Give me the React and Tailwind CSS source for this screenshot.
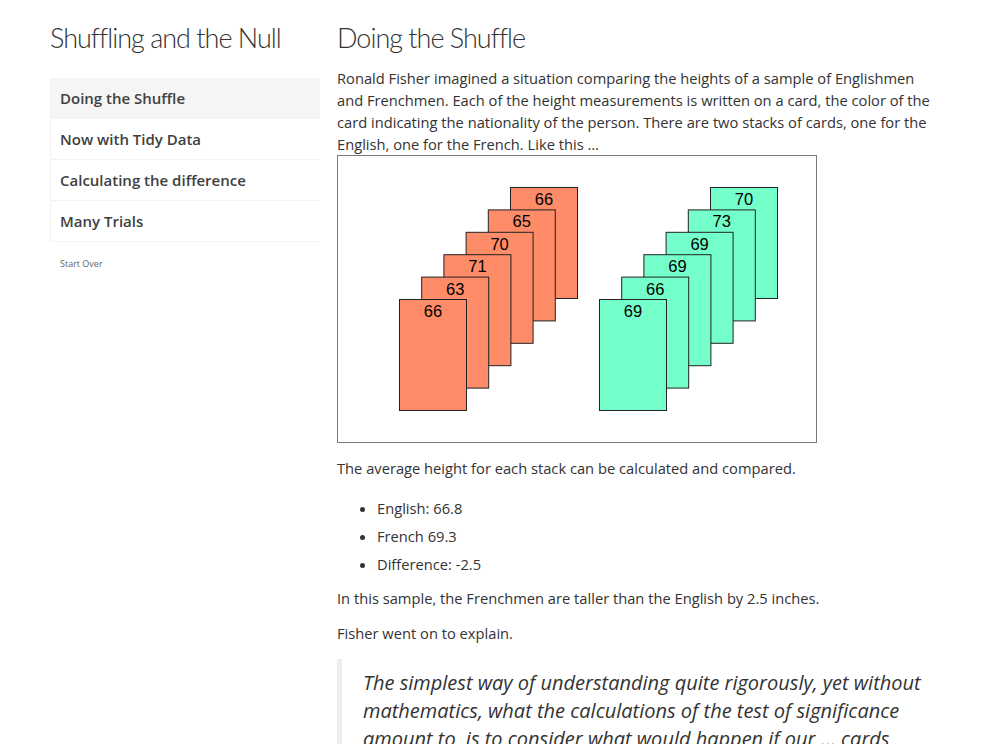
const ORANGE = [66, 63, 71, 70, 65, 66];
const TEAL = [69, 66, 69, 69, 73, 70];

function CardStack({ x0, values, fill }) {
  // values listed front -> back, drawn back -> front
  const cards = values.map((v, i) => ({ v, x: x0 + i * 22.2, y: 143 - i * 22.4 }));
  return (
    <g>
      {cards.slice().reverse().map((c, i) => (
        <g key={i}>
          <rect x={c.x + 0.5} y={c.y + 0.5} width={67} height={111} fill={fill} stroke="#222" strokeWidth="1" />
          <text x={c.x + 34} y={c.y + 18} textAnchor="middle" fontSize="16.5" fill="#000" fontFamily="'Liberation Sans', Arial, sans-serif">
            {c.v}
          </text>
        </g>
      ))}
    </g>
  );
}

function Figure() {
  return (
    <div className="w-[480px] h-[288px] border border-[#7a7a7a] bg-white">
      <svg width="478" height="286" viewBox="0 0 478 286">
        <CardStack x0={61} values={ORANGE} fill="#ff8c69" />
        <CardStack x0={261} values={TEAL} fill="#74ffca" />
      </svg>
    </div>
  );
}

const NAV = ['Doing the Shuffle', 'Now with Tidy Data', 'Calculating the difference', 'Many Trials'];

export default function App() {
  const body = { fontFamily: "'Open Sans', 'Noto Sans', sans-serif" };
  const light = { fontFamily: "Lato, 'Helvetica Neue', sans-serif" };

  return (
    <div className="h-[744px] overflow-hidden bg-white text-[#333]" style={body}>
      <div className="flex pl-[50px] pt-[20px] gap-[17px]">
        {/* sidebar */}
        <div className="w-[270px] shrink-0">
          <h1 className="text-[27px] leading-[36px] font-light tracking-[-1px] text-[#333] mb-[22px]" style={light}>
            Shuffling and the Null
          </h1>
          <ul className="border-l border-[#f2f2f2]">
            {NAV.map((n, i) => (
              <li
                key={n}
                className={`h-[41px] flex items-center pl-[9px] pt-[1px] text-[15px] font-semibold text-[#404040] border-b border-[#f3f3f3] ${i === 0 ? 'bg-[#f5f5f5]' : 'bg-white'}`}
              >
                {n}
              </li>
            ))}
          </ul>
          <div className="mt-[15px] pl-[10px] text-[9px] text-[#666]">Start Over</div>
        </div>

        {/* main */}
        <div className="w-[596px] text-[14.7px] leading-[22px]">
          <h2 className="text-[27px] leading-[36px] font-light tracking-[-1px] text-[#333] mb-[11px]" style={light}>
            Doing the Shuffle
          </h2>
          <p>
            Ronald Fisher imagined a situation comparing the heights of a sample of Englishmen and Frenchmen. Each of
            the height measurements is written on a card, the color of the card indicating the nationality of the
            person. There are two stacks of cards, one for the English, one for the French. Like this …
          </p>
          <Figure />
          <p className="mt-[14px]">The average height for each stack can be calculated and compared.</p>
          <ul className="mt-[15px] pl-[40px] list-disc">
            <li className="py-[3px]">English: 66.8</li>
            <li className="py-[3px]">French 69.3</li>
            <li className="py-[3px]">Difference: -2.5</li>
          </ul>
          <p className="mt-[9px]">In this sample, the Frenchmen are taller than the English by 2.5 inches.</p>
          <p className="mt-[13px]">Fisher went on to explain.</p>
          <blockquote className="mt-[15px] border-l-[5px] border-[#eee] pl-[21px] pt-[10px] pr-0 text-[20px] leading-[28px] italic">
            The simplest way of understanding quite rigorously, yet without mathematics, what the calculations of the
            test of significance amount to, is to consider what would happen if our … cards, were shuffled and
            dealt into two new stacks.
          </blockquote>
        </div>
      </div>
    </div>
  );
}
